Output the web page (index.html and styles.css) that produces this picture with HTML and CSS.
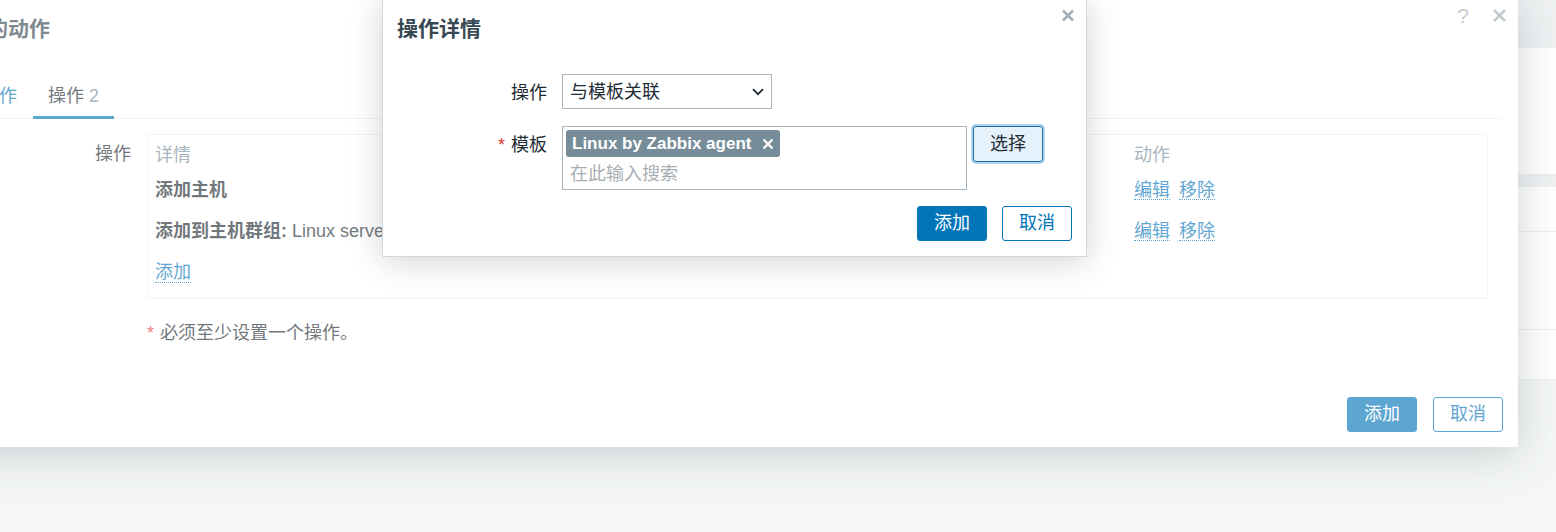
FILE: index.html
```html
<!DOCTYPE html>
<html lang="zh-CN">
<head>
    <meta charset="UTF-8">
    <meta name="viewport" content="width=device-width, initial-scale=1.0">
    <title>新的动作</title>
    <link rel="stylesheet" href="styles.css">
</head>
<body>
    <!-- page behind the dialogs -->
    <div class="page">
        <div class="page-head"></div>
        <div class="page-row r1"></div>
        <div class="page-row band"></div>
        <div class="page-row r2"></div>
        <div class="page-row r3"></div>
        <div class="page-row r4"></div>
    </div>

    <div class="dialog outer">
        <div class="dlg-head">
            <h4 class="dlg-title">新的动作</h4>
            <div class="dlg-tools">
                <span class="btn-help">?</span>
                <svg class="btn-close" width="15" height="15" viewBox="0 0 15 15"><path d="M2 2L13 13M13 2L2 13" stroke="#a3aeb5" stroke-width="2.6" fill="none"/></svg>
            </div>
        </div>

        <div class="tabs">
            <div class="tab"><a class="tab-link">动作</a></div>
            <div class="tab active">操作 <span class="tab-count">2</span></div>
        </div>

        <div class="form-grid">
            <label class="form-label">操作</label>
            <div class="form-field">
                <div class="ops-box">
                    <table class="ops-table">
                        <thead>
                            <tr>
                                <th class="col-detail">详情</th>
                                <th>动作</th>
                            </tr>
                        </thead>
                        <tbody>
                            <tr>
                                <td><b>添加主机</b></td>
                                <td><span class="links"><a class="link">编辑</a><a class="link">移除</a></span></td>
                            </tr>
                            <tr>
                                <td><b>添加到主机群组:</b> Linux servers</td>
                                <td><span class="links"><a class="link">编辑</a><a class="link">移除</a></span></td>
                            </tr>
                            <tr>
                                <td class="add-cell" colspan="2"><a class="link">添加</a></td>
                            </tr>
                        </tbody>
                    </table>
                </div>
                <p class="note"><span class="req">*</span>必须至少设置一个操作。</p>
            </div>
        </div>

        <div class="dlg-foot">
            <button class="btn">添加</button>
            <button class="btn btn-alt">取消</button>
        </div>
    </div>

    <div class="overlay-bg"></div>

    <div class="dialog inner">
        <div class="dlg-head">
            <h4 class="dlg-title">操作详情</h4>
            <svg class="btn-close" width="14" height="15" viewBox="0 0 14 15"><path d="M2 2.5L12 12.5M12 2.5L2 12.5" stroke="#a3aeb5" stroke-width="2.6" fill="none"/></svg>
        </div>

        <div class="i-form">
            <div class="i-row">
                <label class="form-label">操作</label>
                <div class="select">
                    <span>与模板关联</span>
                    <svg width="12" height="8" viewBox="0 0 12 8"><path d="M1 1.2l5 5 5-5" fill="none" stroke="#1f2c33" stroke-width="1.8"/></svg>
                </div>
            </div>
            <div class="i-row">
                <label class="form-label"><span class="req">*</span>模板</label>
                <div class="ms-wrap">
                    <div class="ms">
                        <span class="ms-tag">Linux by Zabbix agent
                            <svg width="12" height="12" viewBox="0 0 12 12"><path d="M1.5 1.5L10.5 10.5M10.5 1.5L1.5 10.5" stroke="#fff" stroke-width="2.4" fill="none"/></svg>
                        </span>
                        <div class="ms-input">在此输入搜索</div>
                    </div>
                    <button class="btn-grey">选择</button>
                </div>
            </div>
        </div>

        <div class="dlg-foot">
            <button class="btn">添加</button>
            <button class="btn btn-alt">取消</button>
        </div>
    </div>
</body>
</html>
```

FILE: styles.css
```css
body {
    margin: 0;
    width: 1556px;
    height: 532px;
    position: relative;
    overflow: hidden;
    background-color: #eff2f2;
    font-family: "Liberation Sans", Arial, "Noto Sans CJK SC", sans-serif;
    font-size: 18px;
    line-height: 20px;
    color: #1f2c33;
}

/* page behind */
.page-head {
    height: 48px;
    background-color: #e6eaec;
}
.page-row {
    background-color: #fff;
    border-bottom: 1px solid #dfe4e7;
    box-sizing: border-box;
}
.page-row.r1 { height: 127px; }
.page-row.band { height: 12px; background-color: #e6eaec; border-bottom: none; }
.page-row.r2 { height: 45px; }
.page-row.r3 { height: 98px; }
.page-row.r4 { height: 50px; }

/* dialogs */
.dialog {
    position: absolute;
    box-sizing: border-box;
    background-color: #fff;
    display: flex;
    flex-direction: column;
}
.outer {
    left: -49px;
    top: 0;
    width: 1567px;
    height: 447px;
    padding: 0 15px 15px;
    box-shadow: 0 6px 40px rgba(40, 55, 65, 0.35);
}
.inner {
    left: 382px;
    top: -1px;
    width: 705px;
    height: 258px;
    padding: 0 14px 14px;
    border: 1px solid #d2d8dc;
    box-shadow: 0 4px 30px rgba(40, 55, 65, 0.22);
}
.overlay-bg {
    position: absolute;
    left: 0;
    top: 0;
    right: 0;
    bottom: 0;
    background-color: rgba(255, 255, 255, 0.36);
}

.dlg-head {
    display: flex;
    justify-content: space-between;
    align-items: flex-start;
    height: 58px;
    flex-shrink: 0;
}
.dlg-title {
    margin: 17px 0 0;
    font-size: 21px;
    line-height: 24px;
    font-weight: bold;
    color: #384853;
}
.dlg-tools {
    display: flex;
    align-items: flex-start;
    gap: 23px;
    margin-top: 5px;
    margin-right: -4px;
}
.btn-help {
    font-size: 21px;
    line-height: 22px;
    color: #a3aeb5;
}
.outer .btn-close {
    margin-top: 3px;
}
.inner .btn-close {
    margin-top: 8px;
    margin-right: -3px;
}

/* tabs */
.tabs {
    display: flex;
    margin-top: 15px;
    border-bottom: 1px solid #ebeef0;
}
.tab {
    padding: 13px 15px 10px;
    border-bottom: 3px solid transparent;
    margin-bottom: -1px;
    margin-right: 1px;
}
.tab.active {
    border-bottom-color: #0275b8;
}
.tab-link {
    color: #0275b8;
}
.tab-count {
    color: #768d99;
}

/* outer form */
.form-grid {
    display: grid;
    grid-template-columns: 165px 1fr;
    column-gap: 16px;
    margin-top: 15px;
}
.form-label {
    text-align: right;
    padding-top: 10px;
}
.ops-box {
    border: 1px solid #ebeef0;
    padding: 0 7px;
    margin-right: 15px;
}
.ops-table {
    width: 100%;
    border-collapse: collapse;
}
.ops-table th {
    text-align: left;
    font-weight: normal;
    color: #768d99;
    padding: 10px 0 3px;
}
.ops-table .col-detail {
    width: 979px;
}
.ops-table td {
    padding: 12px 0 9px;
    vertical-align: top;
    white-space: nowrap;
}
.ops-table td.add-cell {
    padding-bottom: 16px;
}
.links {
    display: flex;
    height: 20px;
    gap: 9px;
}
.link {
    color: #0275b8;
    border-bottom: 1px dotted #0275b8;
    text-decoration: none;
}
.note {
    margin: 24px 0 0;
    color: #1f2c33;
}
.req {
    color: #e33734;
    margin-right: 6px;
}

.dlg-foot {
    margin-top: auto;
    display: flex;
    justify-content: flex-end;
    gap: 16px;
}
.inner .dlg-foot {
    margin-top: 16px;
    gap: 15px;
}
.btn {
    height: 35px;
    padding: 0 16px;
    border: 1px solid #0275b8;
    border-radius: 3px;
    background-color: #0275b8;
    color: #fff;
    font: inherit;
    line-height: 33px;
}
.btn-alt {
    background-color: #fff;
    color: #0275b8;
}

/* inner form */
.i-form {
    margin-top: 16px;
    display: flex;
    flex-direction: column;
    gap: 17px;
}
.i-row {
    display: grid;
    grid-template-columns: 150px auto;
    column-gap: 15px;
    align-items: start;
}
.i-row .form-label {
    padding-top: 9px;
}
.select {
    width: 210px;
    height: 35px;
    box-sizing: border-box;
    border: 1px solid #a8b5be;
    padding: 1px 7px 0;
    display: flex;
    align-items: center;
    justify-content: space-between;
}
.ms-wrap {
    display: flex;
    align-items: flex-start;
    gap: 6px;
}
.ms {
    width: 405px;
    height: 64px;
    box-sizing: border-box;
    border: 1px solid #a8b5be;
    padding: 3px;
}
.ms-tag {
    display: inline-flex;
    align-items: center;
    gap: 11px;
    height: 27px;
    padding: 0 6px;
    border-radius: 3px;
    background-color: #768d99;
    color: #fff;
    font-weight: bold;
    font-size: 17px;
}
.ms-input {
    margin-top: 7px;
    padding-left: 4px;
    color: #a7aeb3;
}
.btn-grey {
    height: 36px;
    padding: 0 16px;
    border: 1px solid #1e6ea8;
    border-radius: 3px;
    background-color: #e5f1fb;
    color: #1f2c33;
    font: inherit;
    line-height: 34px;
    box-shadow: 0 0 0 2px #b4d8f1;
}
```
